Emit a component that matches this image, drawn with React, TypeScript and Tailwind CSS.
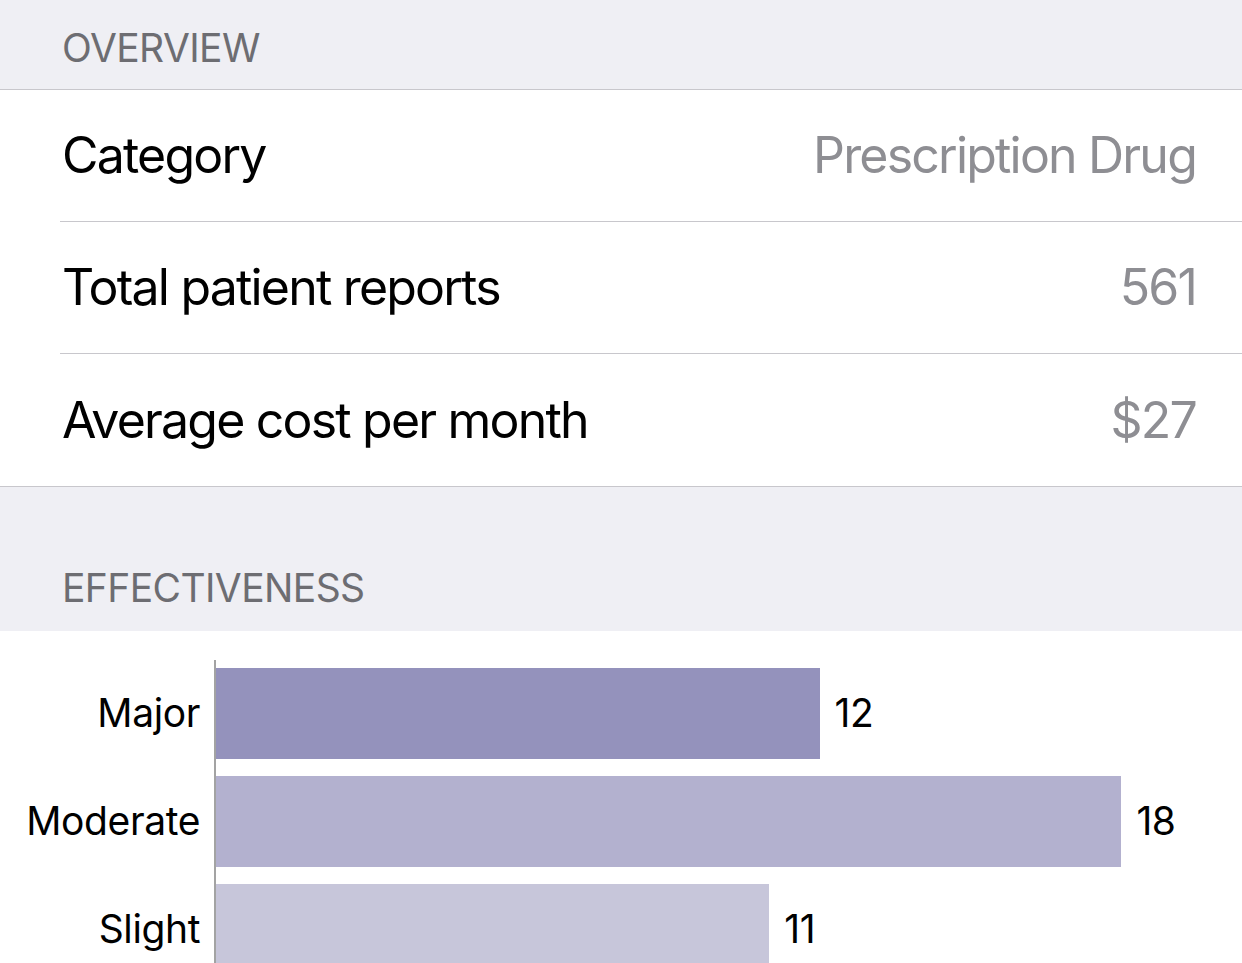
const rows = [
  { label: "Category", value: "Prescription Drug" },
  { label: "Total patient reports", value: "561" },
  { label: "Average cost per month", value: "$27" },
];

const bars = [
  { label: "Major", value: 12, color: "bg-[#9492bc]" },
  { label: "Moderate", value: 18, color: "bg-[#b3b1cf]" },
  { label: "Slight", value: 11, color: "bg-[#c7c6da]" },
];

// px per report, measured off the chart
const UNIT = 50.3;

export default function App() {
  return (
    <div className="h-[963px] w-[1242px] overflow-hidden bg-white font-['Inter','Liberation_Sans',sans-serif]">
      <div className="flex h-[90px] items-end border-b border-[#c8c7cc] bg-[#efeff4] pb-[22px] pl-[62px]">
        <span className="text-[39px] leading-none tracking-[-0.6px] text-[#6d6d72]">OVERVIEW</span>
      </div>

      <div className="border-b border-[#c8c7cc] pl-[60px]">
        {rows.map((r, i) => (
          <div
            key={r.label}
            className={`flex h-[132px] items-center justify-between pr-[46px] ${
              i < rows.length - 1 ? "border-b border-[#c8c7cc]" : ""
            }`}
          >
            <span className="pl-[2px] text-[50px] tracking-[-1.8px] text-black">{r.label}</span>
            <span className="text-[50px] tracking-[-1.8px] text-[#8e8e93]">{r.value}</span>
          </div>
        ))}
      </div>

      <div className="flex h-[144px] items-end bg-[#efeff4] pb-[24px] pl-[62px]">
        <span className="text-[39px] leading-none tracking-[-0.6px] text-[#6d6d72]">EFFECTIVENESS</span>
      </div>

      <div className="flex pt-[29px]">
        <div className="flex w-[200px] flex-col gap-[17px] pt-[8px]">
          {bars.map((b) => (
            <div key={b.label} className="flex h-[91px] items-center justify-end">
              <span className="text-[39px] tracking-[-0.4px] text-black">{b.label}</span>
            </div>
          ))}
        </div>
        <div className="ml-[14px] flex flex-col gap-[17px] border-l-2 border-[#a3a3a3] pt-[8px]">
          {bars.map((b) => (
            <div key={b.label} className="flex h-[91px] items-center">
              <div className={`h-full ${b.color}`} style={{ width: b.value * UNIT }} />
              <span className="ml-[15px] text-[39px] tracking-[-0.4px] text-black">{b.value}</span>
            </div>
          ))}
        </div>
      </div>
    </div>
  );
}
